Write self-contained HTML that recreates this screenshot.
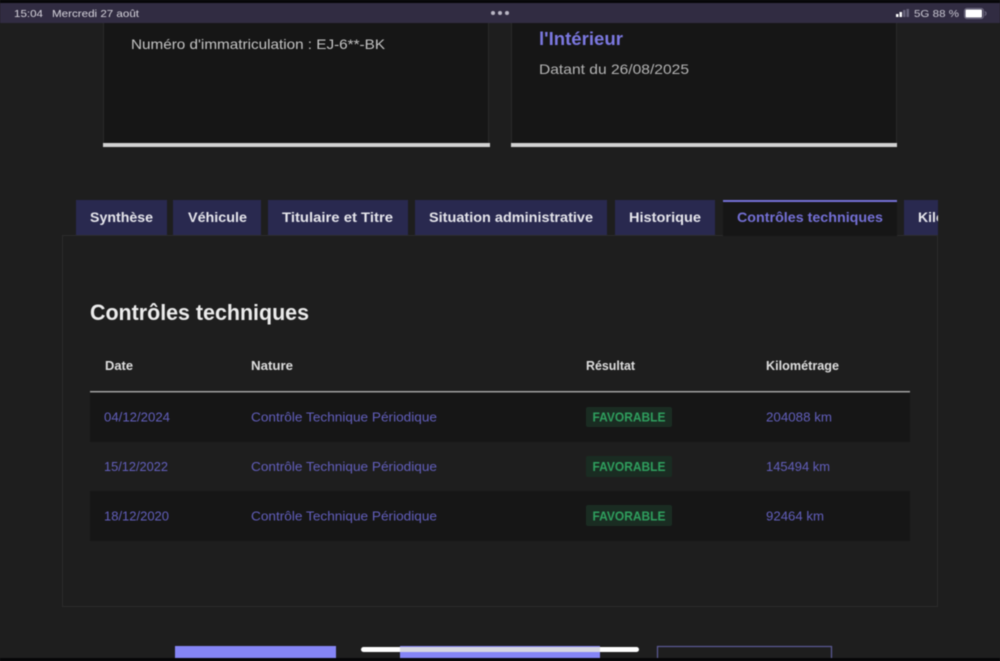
<!DOCTYPE html>
<html lang="fr">
<head>
<meta charset="utf-8">
<title>Contrôles techniques</title>
<style>
html,body{margin:0;padding:0;background:#1e1e1e;width:1000px;height:661px;overflow:hidden}
svg{display:block;filter:blur(.5px)}
text{font-family:"Liberation Sans",sans-serif}
.b{font-weight:700}
</style>
</head>
<body>
<svg width="1000" height="661" viewBox="0 0 1000 661" xmlns="http://www.w3.org/2000/svg">
  <defs><clipPath id="k"><rect x="904" y="200" width="34" height="35"/></clipPath></defs>
  <rect width="1000" height="661" fill="#1e1e1e"/>

  <!-- top cards -->
  <rect x="103" y="20" width="386" height="124" fill="#161616"/>
  <rect x="103" y="20" width="1" height="124" fill="#2a2a2a"/>
  <rect x="488" y="20" width="1" height="124" fill="#2a2a2a"/>
  <rect x="103" y="143" width="387" height="4" fill="#d2d2d2"/>
  <rect x="511" y="20" width="386" height="124" fill="#161616"/>
  <rect x="511" y="20" width="1" height="124" fill="#2a2a2a"/>
  <rect x="896" y="20" width="1" height="124" fill="#2a2a2a"/>
  <rect x="511" y="143" width="386" height="4" fill="#d2d2d2"/>
  <text x="131" y="49" font-size="14" fill="#c4c4c4" textLength="254" lengthAdjust="spacingAndGlyphs">Numéro d'immatriculation : EJ-6**-BK</text>
  <text x="539" y="45" font-size="18" class="b" fill="#7b78e0" textLength="84" lengthAdjust="spacingAndGlyphs">l'Intérieur</text>
  <text x="539" y="74" font-size="14" fill="#b4b4b4" textLength="150" lengthAdjust="spacingAndGlyphs">Datant du 26/08/2025</text>

  <!-- panel -->
  <rect x="62.500" y="235.500" width="875" height="371" fill="#1e1e1e" stroke="#2b2b2b" stroke-width="1"/>

  <!-- tabs -->
  <rect x="76" y="200" width="91" height="35" fill="#29294f"/>
  <rect x="173" y="200" width="88" height="35" fill="#29294f"/>
  <rect x="268" y="200" width="140" height="35" fill="#29294f"/>
  <rect x="415" y="200" width="192" height="35" fill="#29294f"/>
  <rect x="615" y="200" width="100" height="35" fill="#29294f"/>
  <rect x="723" y="200" width="174" height="36" fill="#161616"/>
  <rect x="723" y="200" width="174" height="2" fill="#7470d6"/>
  <rect x="904" y="200" width="34" height="35" fill="#29294f"/>
  <g font-size="14" class="b" fill="#e6e6ec">
    <text x="90" y="222" textLength="63" lengthAdjust="spacingAndGlyphs">Synthèse</text>
    <text x="188" y="222" textLength="59" lengthAdjust="spacingAndGlyphs">Véhicule</text>
    <text x="282" y="222" textLength="111" lengthAdjust="spacingAndGlyphs">Titulaire et Titre</text>
    <text x="429" y="222" textLength="164" lengthAdjust="spacingAndGlyphs">Situation administrative</text>
    <text x="629" y="222" textLength="72" lengthAdjust="spacingAndGlyphs">Historique</text>
    <text x="737" y="222" fill="#7470d6" textLength="146" lengthAdjust="spacingAndGlyphs">Contrôles techniques</text>
    <g clip-path="url(#k)"><text x="918" y="222">Kilométrage</text></g>
  </g>

  <text x="90" y="320" font-size="22" class="b" fill="#ececec" textLength="219" lengthAdjust="spacingAndGlyphs">Contrôles techniques</text>

  <!-- table -->
  <g font-size="12.5" class="b" fill="#dedede">
    <text x="105" y="370" textLength="28" lengthAdjust="spacingAndGlyphs">Date</text>
    <text x="251" y="370" textLength="42" lengthAdjust="spacingAndGlyphs">Nature</text>
    <text x="586" y="370" textLength="49" lengthAdjust="spacingAndGlyphs">Résultat</text>
    <text x="766" y="370" textLength="73" lengthAdjust="spacingAndGlyphs">Kilométrage</text>
  </g>
  <rect x="90" y="391" width="820" height="1.400" fill="#a8a8a8"/>
  <rect x="90" y="393" width="820" height="49" fill="#161616"/>
  <rect x="90" y="491" width="820" height="50" fill="#161616"/>

  <g font-size="13" fill="#625fbc">
    <text x="104" y="421.500" textLength="66" lengthAdjust="spacingAndGlyphs">04/12/2024</text>
    <text x="251" y="421.500" textLength="186" lengthAdjust="spacingAndGlyphs">Contrôle Technique Périodique</text>
    <text x="766" y="421.500" textLength="66" lengthAdjust="spacingAndGlyphs">204088 km</text>
    <text x="104" y="471" textLength="64" lengthAdjust="spacingAndGlyphs">15/12/2022</text>
    <text x="251" y="471" textLength="186" lengthAdjust="spacingAndGlyphs">Contrôle Technique Périodique</text>
    <text x="766" y="471" textLength="64" lengthAdjust="spacingAndGlyphs">145494 km</text>
    <text x="104" y="520.500" textLength="65" lengthAdjust="spacingAndGlyphs">18/12/2020</text>
    <text x="251" y="520.500" textLength="186" lengthAdjust="spacingAndGlyphs">Contrôle Technique Périodique</text>
    <text x="766" y="520.500" textLength="58" lengthAdjust="spacingAndGlyphs">92464 km</text>
  </g>

  <rect x="586" y="407" width="86" height="20" rx="2" fill="#1a2c22"/>
  <rect x="586" y="456" width="86" height="21" rx="2" fill="#1a2c22"/>
  <rect x="586" y="505" width="86" height="21" rx="2" fill="#1a2c22"/>
  <g font-size="12.5" class="b" fill="#2f9f5e">
    <text x="592.500" y="421.500" textLength="73" lengthAdjust="spacingAndGlyphs">FAVORABLE</text>
    <text x="592.500" y="471" textLength="73" lengthAdjust="spacingAndGlyphs">FAVORABLE</text>
    <text x="592.500" y="520.500" textLength="73" lengthAdjust="spacingAndGlyphs">FAVORABLE</text>
  </g>

  <!-- bottom buttons -->
  <rect x="175" y="646" width="161" height="15" fill="#8585f6"/>
  <rect x="400" y="646" width="200" height="15" fill="#8585f6"/>
  <rect x="657.500" y="646.500" width="174" height="16" fill="#1e1e1e" stroke="#5c5a98" stroke-width="1.200"/>
  <rect x="361" y="647" width="278" height="5" rx="2.500" fill="#ffffff"/>
  <rect x="400" y="647" width="200" height="5" fill="#d6d6e0"/>

  <!-- status bar -->
  <rect x="0" y="0" width="1000" height="3" fill="#060608"/>
  <rect x="0" y="3" width="1000" height="20" fill="#312c42"/>
  <text x="14" y="17" font-size="10.500" fill="#d8d6de" textLength="29" lengthAdjust="spacingAndGlyphs">15:04</text>
  <text x="52" y="17" font-size="10.500" fill="#d8d6de" textLength="87" lengthAdjust="spacingAndGlyphs">Mercredi 27 août</text>
  <circle cx="493" cy="13" r="2" fill="#b9b6c4"/>
  <circle cx="500" cy="13" r="2" fill="#b9b6c4"/>
  <circle cx="507" cy="13" r="2" fill="#b9b6c4"/>
  <rect x="896" y="14" width="2.500" height="3" fill="#ffffff"/>
  <rect x="899.500" y="12" width="2.500" height="5" fill="#ffffff"/>
  <rect x="903" y="10" width="2.500" height="7" fill="#67637a"/>
  <rect x="906.500" y="9" width="2.500" height="8" fill="#67637a"/>
  <text x="914" y="17" font-size="10.500" fill="#c9c7d2" textLength="45" lengthAdjust="spacingAndGlyphs">5G 88 %</text>
  <rect x="964.500" y="8.500" width="19" height="10" rx="2.500" fill="none" stroke="#77738a" stroke-width="1"/>
  <rect x="965.500" y="9.500" width="16.500" height="8" rx="1" fill="#ffffff"/>
  <path d="M985 11.500q2 2 0 4" fill="none" stroke="#77738a" stroke-width="1"/>

  <rect x="0" y="658" width="1000" height="3" fill="#060608"/>
</svg>
</body>
</html>
